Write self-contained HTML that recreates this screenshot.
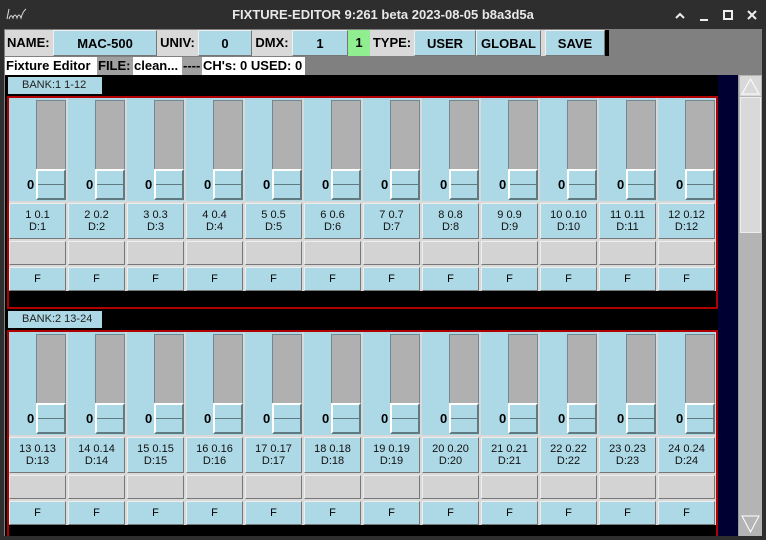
<!DOCTYPE html>
<html style="overflow:hidden;height:540px"><head><meta charset="utf-8"><style>
*{box-sizing:border-box;margin:0;padding:0}
body{width:766px;height:540px;background:#2e2e2e;font-family:"Liberation Sans",sans-serif;position:relative;overflow:hidden}
.abs{position:absolute}
#title{left:0;top:0;width:766px;height:29px;background:#2e2e2e;color:#e8e8e8;font-weight:bold;font-size:13px;text-align:center;line-height:30px}
#content{left:4px;top:29px;width:758px;height:507px;background:#808080}
.t{position:absolute;height:26px;top:30px;font-weight:bold;font-size:13px;line-height:26px;text-align:center}
.lab{background:#d9d9d9;color:#000}
.btn{background:#add8e6;border:1px solid #f0f0f0;border-right-color:#777;border-bottom-color:#777}
.r2{position:absolute;top:57px;height:18px;font-weight:bold;font-size:13px;line-height:18px;padding:0 1px}
#main{left:5px;top:75px;width:713px;height:461px;background:#000}
.bank{position:absolute;left:8px;width:94px;height:17px;background:#add8e6;font-size:11px;line-height:17px;padding-left:14px;color:#222}
.frame{position:absolute;left:7px;width:711px;border:2px solid #b00000;background:#000;overflow:hidden}
.grid{display:grid;grid-template-columns:repeat(12,57px);column-gap:2px;background:#d9d9d9;height:193px}
.col{position:relative;height:193px}
.top{position:absolute;left:0;top:0;width:57px;height:103px;background:#add8e6}
.fd{position:absolute;left:27px;top:2px;width:30px;height:70px;background:#b0b0b0;border:1px solid #6f8a90;border-bottom:none}
.kn{position:absolute;left:27px;top:71px;width:30px;height:31px;background:#add8e6;border:2px solid #fff;border-right-color:#5f7a80;border-bottom-color:#5f7a80}
.kn:after{content:"";position:absolute;left:0;right:0;top:13px;height:1px;background:#5f7a80}
.z{position:absolute;left:18px;top:79px;font-weight:bold;font-size:13px}
.lb{position:absolute;left:0;top:105px;width:57px;height:36px;background:#add8e6;border:1px solid #eee;border-right-color:#777;border-bottom-color:#777;font-size:11px;text-align:center;line-height:12px;padding-top:5px;color:#111}
.gb{position:absolute;left:0;top:143px;width:57px;height:24px;background:#d3d3d3;border:1px solid #eee;border-right-color:#777;border-bottom-color:#777}
.fb{position:absolute;left:0;top:169px;width:57px;height:24px;background:#add8e6;border:1px solid #eee;border-right-color:#777;border-bottom-color:#777;font-size:11px;text-align:center;line-height:22px}
</style></head><body>
<div id="title" class="abs">FIXTURE-EDITOR 9:261 beta 2023-08-05 b8a3d5a</div>
<svg class="abs" style="left:6px;top:7px" width="22" height="14"><path d="M1 12 L3 2 M3 12 Q5 6 7 11 Q9 5 11 11 Q13 5 15 11 Q17 4 20 2" stroke="#ddd" fill="none" stroke-width="1"/></svg>
<svg class="abs" style="left:672px;top:8px" width="90" height="14"><path d="M4 10 L8 6 L12 10" stroke="#eee" stroke-width="2" fill="none"/><path d="M28 12 H36" stroke="#eee" stroke-width="2"/><rect x="52" y="3" width="8" height="8" stroke="#eee" stroke-width="2" fill="none"/><path d="M76 3 L84 11 M84 3 L76 11" stroke="#eee" stroke-width="2"/></svg>
<div id="content" class="abs"></div>
<div class="t lab" style="left:5px;width:48px;text-align:left;padding-left:2px">NAME:</div>
<div class="t btn" style="left:53px;width:104px">MAC-500</div>
<div class="t lab" style="left:157px;width:41px">UNIV:</div>
<div class="t btn" style="left:198px;width:54px">0</div>
<div class="t lab" style="left:252px;width:40px">DMX:</div>
<div class="t btn" style="left:292px;width:56px">1</div>
<div class="t" style="left:348px;width:22px;background:#90ee90">1</div>
<div class="t lab" style="left:370px;width:44px">TYPE:</div>
<div class="t btn" style="left:414px;width:62px">USER</div>
<div class="t btn" style="left:476px;width:65px">GLOBAL</div>
<div class="t lab" style="left:541px;width:4px"></div>
<div class="t btn" style="left:545px;width:60px">SAVE</div>
<div class="t" style="left:605px;width:4px;background:#000"></div>
<div class="r2" style="left:5px;width:92px;background:#fff">Fixture Editor</div>
<div class="r2" style="left:97px;width:36px;background:#a0a0a0">FILE:</div>
<div class="r2" style="left:133px;width:49px;background:#fff">clean...</div>
<div class="r2" style="left:182px;width:20px;background:#a0a0a0">----</div>
<div class="r2" style="left:202px;width:103px;background:#fff">CH's: 0 USED: 0</div>
<div id="main" class="abs"></div>
<div class="abs" style="left:718px;top:75px;width:20px;height:461px;background:#000033"></div>
<div class="abs" style="left:738px;top:75px;width:24px;height:461px;background:#b4b4b4;border-left:1px solid #999"></div>
<div class="abs" style="left:740px;top:76px;width:21px;height:20px;background:#d9d9d9"></div>
<svg class="abs" style="left:740px;top:76px" width="21" height="20"><path d="M2 18 L10.5 3 L19 18 Z" fill="#d9d9d9" stroke="#fff"/></svg>
<div class="abs" style="left:740px;top:97px;width:21px;height:136px;background:#d9d9d9;border:1px solid #eee"></div>
<svg class="abs" style="left:740px;top:514px" width="21" height="21"><path d="M2 2 L10.5 18 L19 2 Z" fill="#b4b4b4" stroke="#fff"/></svg>

<div class="bank" style="top:77px">BANK:1 1-12</div>
<div class="frame" style="top:96px;height:213px">
<div class="grid">
<div class="col"><div class="top"><div class="fd"></div><div class="kn"></div><div class="z">0</div></div><div class="lb">1 0.1<br>D:1</div><div class="gb"></div><div class="fb">F</div></div>
<div class="col"><div class="top"><div class="fd"></div><div class="kn"></div><div class="z">0</div></div><div class="lb">2 0.2<br>D:2</div><div class="gb"></div><div class="fb">F</div></div>
<div class="col"><div class="top"><div class="fd"></div><div class="kn"></div><div class="z">0</div></div><div class="lb">3 0.3<br>D:3</div><div class="gb"></div><div class="fb">F</div></div>
<div class="col"><div class="top"><div class="fd"></div><div class="kn"></div><div class="z">0</div></div><div class="lb">4 0.4<br>D:4</div><div class="gb"></div><div class="fb">F</div></div>
<div class="col"><div class="top"><div class="fd"></div><div class="kn"></div><div class="z">0</div></div><div class="lb">5 0.5<br>D:5</div><div class="gb"></div><div class="fb">F</div></div>
<div class="col"><div class="top"><div class="fd"></div><div class="kn"></div><div class="z">0</div></div><div class="lb">6 0.6<br>D:6</div><div class="gb"></div><div class="fb">F</div></div>
<div class="col"><div class="top"><div class="fd"></div><div class="kn"></div><div class="z">0</div></div><div class="lb">7 0.7<br>D:7</div><div class="gb"></div><div class="fb">F</div></div>
<div class="col"><div class="top"><div class="fd"></div><div class="kn"></div><div class="z">0</div></div><div class="lb">8 0.8<br>D:8</div><div class="gb"></div><div class="fb">F</div></div>
<div class="col"><div class="top"><div class="fd"></div><div class="kn"></div><div class="z">0</div></div><div class="lb">9 0.9<br>D:9</div><div class="gb"></div><div class="fb">F</div></div>
<div class="col"><div class="top"><div class="fd"></div><div class="kn"></div><div class="z">0</div></div><div class="lb">10 0.10<br>D:10</div><div class="gb"></div><div class="fb">F</div></div>
<div class="col"><div class="top"><div class="fd"></div><div class="kn"></div><div class="z">0</div></div><div class="lb">11 0.11<br>D:11</div><div class="gb"></div><div class="fb">F</div></div>
<div class="col"><div class="top"><div class="fd"></div><div class="kn"></div><div class="z">0</div></div><div class="lb">12 0.12<br>D:12</div><div class="gb"></div><div class="fb">F</div></div>
</div></div>

<div class="bank" style="top:311px">BANK:2 13-24</div>
<div class="frame" style="top:330px;height:206px;border-bottom:none">
<div class="grid">
<div class="col"><div class="top"><div class="fd"></div><div class="kn"></div><div class="z">0</div></div><div class="lb">13 0.13<br>D:13</div><div class="gb"></div><div class="fb">F</div></div>
<div class="col"><div class="top"><div class="fd"></div><div class="kn"></div><div class="z">0</div></div><div class="lb">14 0.14<br>D:14</div><div class="gb"></div><div class="fb">F</div></div>
<div class="col"><div class="top"><div class="fd"></div><div class="kn"></div><div class="z">0</div></div><div class="lb">15 0.15<br>D:15</div><div class="gb"></div><div class="fb">F</div></div>
<div class="col"><div class="top"><div class="fd"></div><div class="kn"></div><div class="z">0</div></div><div class="lb">16 0.16<br>D:16</div><div class="gb"></div><div class="fb">F</div></div>
<div class="col"><div class="top"><div class="fd"></div><div class="kn"></div><div class="z">0</div></div><div class="lb">17 0.17<br>D:17</div><div class="gb"></div><div class="fb">F</div></div>
<div class="col"><div class="top"><div class="fd"></div><div class="kn"></div><div class="z">0</div></div><div class="lb">18 0.18<br>D:18</div><div class="gb"></div><div class="fb">F</div></div>
<div class="col"><div class="top"><div class="fd"></div><div class="kn"></div><div class="z">0</div></div><div class="lb">19 0.19<br>D:19</div><div class="gb"></div><div class="fb">F</div></div>
<div class="col"><div class="top"><div class="fd"></div><div class="kn"></div><div class="z">0</div></div><div class="lb">20 0.20<br>D:20</div><div class="gb"></div><div class="fb">F</div></div>
<div class="col"><div class="top"><div class="fd"></div><div class="kn"></div><div class="z">0</div></div><div class="lb">21 0.21<br>D:21</div><div class="gb"></div><div class="fb">F</div></div>
<div class="col"><div class="top"><div class="fd"></div><div class="kn"></div><div class="z">0</div></div><div class="lb">22 0.22<br>D:22</div><div class="gb"></div><div class="fb">F</div></div>
<div class="col"><div class="top"><div class="fd"></div><div class="kn"></div><div class="z">0</div></div><div class="lb">23 0.23<br>D:23</div><div class="gb"></div><div class="fb">F</div></div>
<div class="col"><div class="top"><div class="fd"></div><div class="kn"></div><div class="z">0</div></div><div class="lb">24 0.24<br>D:24</div><div class="gb"></div><div class="fb">F</div></div>
</div></div>
<div class="abs" style="left:0;top:536px;width:766px;height:4px;background:#2e2e2e"></div>
</body></html>
